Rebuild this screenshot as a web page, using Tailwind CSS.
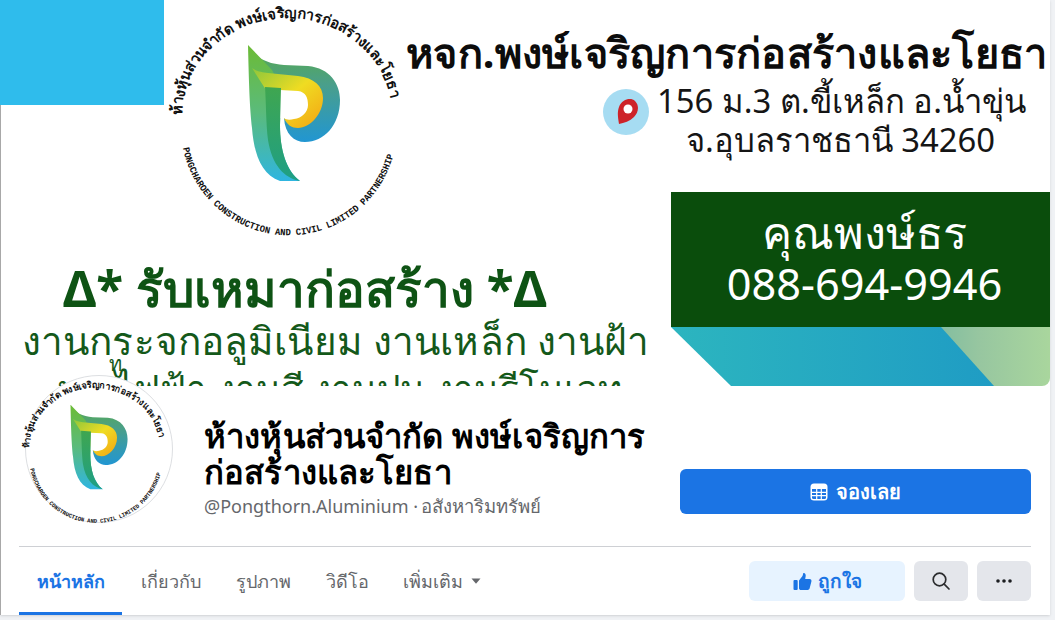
<!DOCTYPE html>
<html lang="th">
<head>
    <meta charset="UTF-8">
    <title>ห้างหุ้นส่วนจำกัด พงษ์เจริญการก่อสร้างและโยธา</title>
    <script src="https://cdn.jsdelivr.net/npm/@tailwindcss/browser@4"></script>
</head>
<body class="bg-[#f0f2f5] font-['Noto_Sans','Liberation_Sans',sans-serif] w-[1055px] h-[620px] overflow-hidden">
    <!-- shared logo, used on the cover and the avatar -->
    <svg class="absolute w-0 h-0" width="0" height="0">
        <defs>
            <linearGradient id="pLeft" x1="0" y1="0" x2="0" y2="1">
                <stop offset="0" stop-color="#6cbb35"/>
                <stop offset="0.5" stop-color="#5abb7c"/>
                <stop offset="1" stop-color="#2fb5e0"/>
            </linearGradient>
            <linearGradient id="pDark" x1="0" y1="0" x2="0" y2="1">
                <stop offset="0" stop-color="#3fa650"/>
                <stop offset="1" stop-color="#1e9f85"/>
            </linearGradient>
            <linearGradient id="pBowl" x1="0" y1="0" x2="0" y2="1">
                <stop offset="0" stop-color="#5aab45"/>
                <stop offset="0.4" stop-color="#4a9f8a"/>
                <stop offset="1" stop-color="#2196d2"/>
            </linearGradient>
            <linearGradient id="pInner" x1="0" y1="0" x2="1" y2="1">
                <stop offset="0" stop-color="#8cc63c"/>
                <stop offset="0.5" stop-color="#efdc22"/>
                <stop offset="1" stop-color="#f4a313"/>
            </linearGradient>
            <path id="arcTop" d="M182 115 A105 97 0 0 1 392 115"/>
            <path id="arcBottom" d="M183 148 A108 108 0 0 0 395 148"/>
        </defs>
        <symbol id="logo" viewBox="165 5 245 245">
            <path d="M248 45 C254 58 268 64 284 65 L308 66 C330 68 340 84 340 100 C340 125 324 142 305 142 C294 142 285 134 284 118 Z" fill="url(#pBowl)"/>
            <path d="M248 45 C249 90 250 110 252 128 C254 155 262 175 280 181 L300 181 C286 170 280 150 280 125 L281 88 L272 70 Z" fill="url(#pLeft)"/>
            <path d="M252 68 C258 72 262 72 268 73 L298 76 C314 78 323 86 323 98 C323 114 310 128 298 128 C292 128 287 125 284 118 Z" fill="url(#pInner)"/>
            <path d="M280 90 L298 91 C306 92 308 98 308 105 C308 112 302 118 294 119 C290 120 286 120 284 118 L280 118 Z" fill="#fff"/>
            <path d="M265 87 L281 88 L280 125 C280 150 286 170 300 181 C284 178 272 165 268 140 C266 125 266 100 265 87 Z" fill="url(#pDark)"/>
            <text class="font-['Noto_Sans','Liberation_Sans',sans-serif]" font-size="15" font-weight="700" fill="#111"><textPath href="#arcTop" textLength="300" lengthAdjust="spacingAndGlyphs">ห้างหุ้นส่วนจำกัด พงษ์เจริญการก่อสร้างและโยธา</textPath></text>
            <text class="font-['Liberation_Mono',monospace]" font-size="9.5" font-weight="700" fill="#111"><textPath href="#arcBottom" textLength="290" lengthAdjust="spacingAndGlyphs">PONGCHAROEN CONSTRUCTION AND CIVIL  LIMITED PARTNERSHIP</textPath></text>
        </symbol>
    </svg>

    <div class="w-[1050px] h-[615px] bg-white border-l border-[#a8a8a8] shadow-sm relative">
        <!-- cover picture -->
        <div class="relative h-[386px] w-[1049px] overflow-hidden rounded-br-lg bg-white">
            <svg class="absolute left-[164px] top-[5px] w-[245px] h-[245px]"><use href="#logo"/></svg>

            <p class="absolute left-[405px] top-[26px] whitespace-nowrap text-[41.5px] tracking-[0.25px] leading-[52px] font-bold text-[#0c0c0c]">หจก.พงษ์เจริญการก่อสร้างและโยธา</p>

            <div class="absolute left-[602px] top-[89px] w-[46px] h-[46px] rounded-full bg-[#a6dcf2] flex items-center justify-center">
                <svg width="24" height="30" viewBox="0 0 24 30">
                    <path d="M5 27 C4 20 3 16 5 10 C8 2 17 0 21 4 C26 9 24 16 20 20 C16 24 10 26 5 27 Z" fill="#cd2329"/>
                    <circle cx="14" cy="12" r="4.5" fill="#fff"/>
                </svg>
            </div>
            <p class="absolute left-[656px] top-[78px] whitespace-nowrap text-[32.8px] leading-[46px] text-[#151515]">156 ม.3 ต.ขี้เหล็ก อ.น้ำขุ่น</p>
            <p class="absolute left-[685px] top-[117px] whitespace-nowrap text-[32.8px] leading-[46px] text-[#151515]">จ.อุบลราชธานี 34260</p>

            <div class="absolute left-[670px] top-[192px] w-[379px] h-[135px] bg-[#0a4d0c] flex flex-col items-center pt-[14px] pl-[8px] text-white leading-[52px]">
                <p class="text-[45px]">คุณพงษ์ธร</p>
                <p class="text-[43.3px]">088-694-9946</p>
            </div>
            <svg class="absolute left-[670px] top-[327px]" width="379" height="59" viewBox="0 0 379 59">
                <defs>
                    <linearGradient id="tealFill" x1="0" y1="0" x2="1" y2="0">
                        <stop offset="0" stop-color="#2cb5bf"/>
                        <stop offset="1" stop-color="#1f9cc4"/>
                    </linearGradient>
                    <linearGradient id="sageFill" x1="0" y1="0" x2="1" y2="0">
                        <stop offset="0" stop-color="#79b9a0"/>
                        <stop offset="0.45" stop-color="#97c6a0"/>
                        <stop offset="1" stop-color="#a9d69d"/>
                    </linearGradient>
                </defs>
                <rect x="250" width="129" height="59" fill="url(#sageFill)"/>
                <path d="M0 0 L270 0 L323 59 L60 59 Z" fill="url(#tealFill)"/>
            </svg>

            <p class="absolute left-[62px] top-[258px] whitespace-nowrap text-[49.5px] leading-[60px] font-bold text-[#0e5314]">Δ* รับเหมาก่อสร้าง *Δ</p>
            <p class="absolute left-[21px] top-[314px] whitespace-nowrap text-[38.7px] tracking-[0.12px] leading-[52px] text-[#14591a]">งานกระจกอลูมิเนียม งานเหล็ก งานฝ้า</p>
            <p class="absolute left-[108px] top-[354px] text-[20px] leading-[20px] font-medium text-[#14591a]">ท</p>
            <p class="absolute left-[50px] top-[362px] whitespace-nowrap text-[37px] leading-[52px] text-[#14591a]">งานไฟฟ้า งานสี งานปูน งานรีโนเวท</p>
        </div>
        <div class="absolute left-[-1px] top-0 w-[164px] h-[105px] bg-[#2fbcec]"></div>

        <!-- avatar sits over the bottom of the cover -->
        <div class="absolute left-[24px] top-[375px] w-[148px] h-[148px] rounded-full bg-white border border-[#dddfe2]"></div>
        <svg class="absolute left-[18px] top-[380px] w-[152px] h-[152px]"><use href="#logo"/></svg>

        <!-- page title and call to action -->
        <div class="flex h-[160px] pl-[203px] pr-[19px]">
            <div class="w-[460px] pt-[32px]">
                <h1 class="text-[32.8px] tracking-[0.13px] leading-[36px] font-bold text-black">ห้างหุ้นส่วนจำกัด พงษ์เจริญการก่อสร้างและโยธา</h1>
                <p class="mt-[4px] text-[18px] leading-[24px] text-[#65676b] whitespace-nowrap">@Pongthorn.Aluminium · <span class="-ml-[2px] text-[18.5px] font-medium">อสังหาริมทรัพย์</span></p>
            </div>
            <div class="ml-auto pt-[83px]">
                <button class="w-[351px] h-[45px] rounded-md bg-[#1b74e4] text-white flex items-center justify-center gap-[8px] text-[20px] font-bold">
                    <svg width="18" height="18" viewBox="0 0 18 18">
                        <rect x="0.5" y="0.5" width="17" height="17" rx="3.5" fill="#fff"/>
                        <path d="M2 6h14v8.5a1.5 1.5 0 0 1-1.5 1.5h-11A1.5 1.5 0 0 1 2 14.5z" fill="#1b74e4"/>
                        <path d="M2 9.3h14M2 12.7h14M6.7 6v10M11.3 6v10" stroke="#fff" stroke-width="1.2"/>
                    </svg>
                    จองเลย
                </button>
            </div>
        </div>

        <!-- tab bar -->
        <div class="ml-[18px] mr-[19px] border-t border-[#ced0d4] h-[69px] flex justify-between">
            <nav class="flex text-[18px] font-medium text-[#65676b]">
                <a class="w-[103px] h-[68px] flex items-center justify-center text-[#1b74e4] font-bold border-b-[3px] border-[#1b74e4] pt-[3px]">หน้าหลัก</a>
                <a class="ml-[19px] h-[68px] flex items-center">เกี่ยวกับ</a>
                <a class="ml-[35px] h-[68px] flex items-center">รูปภาพ</a>
                <a class="ml-[35px] h-[68px] flex items-center">วิดีโอ</a>
                <a class="ml-[34px] h-[68px] flex items-center gap-[8px]">เพิ่มเติม
                    <svg width="10" height="6" viewBox="0 0 10 6"><path d="M0.5 0.5h9L5 5.8z" fill="#65676b"/></svg>
                </a>
            </nav>
            <div class="flex gap-[9px] pt-[14px]">
                <button class="w-[156px] h-[40px] rounded-md bg-[#e7f3ff] text-[#1b74e4] flex items-center justify-center gap-[6px] text-[19px] font-bold">
                    <svg width="19" height="19" viewBox="0 0 19 19" fill="#1b74e4">
                        <rect x="0.5" y="8" width="4.2" height="10" rx="1"/>
                        <path d="M6 8.5 L9.5 4 C10 3 10 2 10.3 1 C11.8 0.5 13 2 12.7 4 L12.2 7 L16.5 7 C18 7 18.8 8.4 18.4 9.6 L16.6 16.6 C16.3 17.5 15.6 18 14.7 18 L8 18 C7 18 6 17.4 6 16.2 Z"/>
                    </svg>
                    ถูกใจ
                </button>
                <button class="w-[54px] h-[40px] rounded-md bg-[#e4e6eb] flex items-center justify-center">
                    <svg width="20" height="20" viewBox="0 0 20 20" fill="none" stroke="#2b2c2e" stroke-width="1.7" stroke-linecap="round">
                        <circle cx="8.5" cy="8.5" r="6.3"/>
                        <path d="M13.2 13.2 L18 18"/>
                    </svg>
                </button>
                <button class="w-[54px] h-[40px] rounded-md bg-[#e4e6eb] flex items-center justify-center">
                    <svg width="16" height="4" viewBox="0 0 16 4" fill="#1c1e21">
                        <circle cx="2" cy="2" r="1.8"/><circle cx="8" cy="2" r="1.8"/><circle cx="14" cy="2" r="1.8"/>
                    </svg>
                </button>
            </div>
        </div>
    </div>
</body>
</html>
